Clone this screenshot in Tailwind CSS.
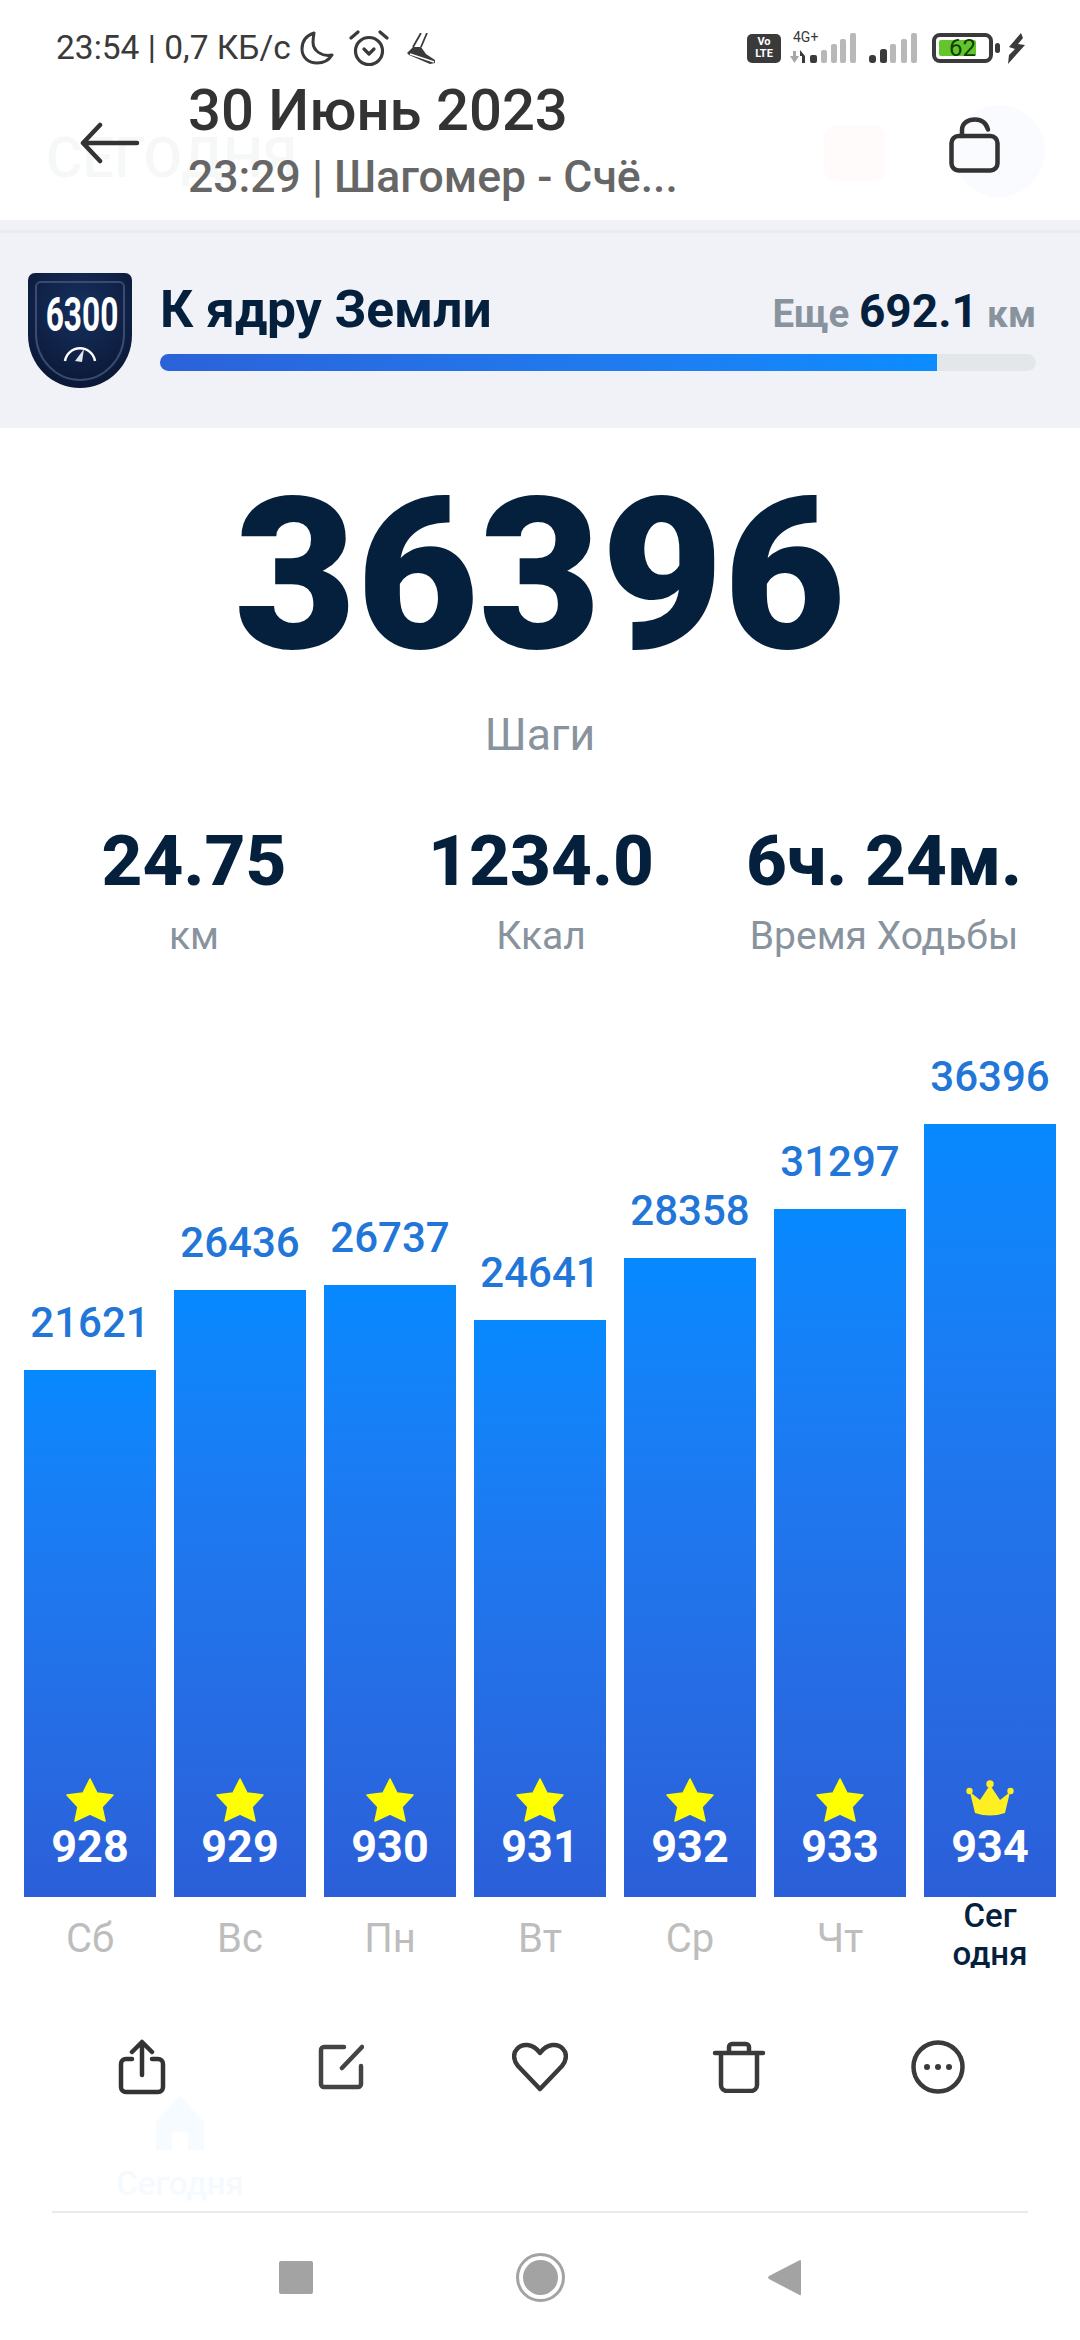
<!DOCTYPE html>
<html><head><meta charset="utf-8">
<script src="https://cdn.jsdelivr.net/npm/@tailwindcss/browser@4"></script>
</head>
<body class="bg-white">
<div class="relative w-[1080px] h-[2340px] overflow-hidden bg-white font-['Roboto',sans-serif]">
  <!-- header -->
  <header class="h-[220px] relative">
    <!-- faint ghost of the page behind the sheet -->
    <div class="absolute left-[46px] top-[126px] text-[56px] leading-[64px] font-medium text-[#f6f8f8]">СЕГОДНЯ</div>
    <div class="absolute left-[824px] top-[125px] w-[62px] h-[56px] rounded-[12px] bg-[#fffbfa]"></div>
    <div class="absolute left-[953px] top-[105px] w-[92px] h-[92px] rounded-full bg-[#f9fbfe]"></div>

    <div class="relative flex items-center justify-between h-[72px] pt-[24px] pl-[56px] pr-[55px]">
      <div class="flex items-center text-[#3a3a3a] text-[33.500px] leading-none">
        <span class="whitespace-nowrap">23:54 | 0,7 КБ/с</span>
        <svg class="w-[34px] h-[34px] ml-[9px]" viewBox="0 0 34 34" fill="none"><path d="M14 2C5 5 2 12 2 18c0 9 7 14 15 14 7 0 12-3 15-8-10 2-19-4-19-13 0-3 .5-6 1-9z" stroke="#3a3a3a" stroke-width="3" stroke-linejoin="round"/></svg>
        <svg class="w-[40px] h-[38px] ml-[15px]" viewBox="0 0 40 38" fill="none" stroke="#3a3a3a" stroke-width="3.200" stroke-linecap="round" stroke-linejoin="round"><circle cx="20" cy="22" r="13.500"/><path d="M15 20l5 5 5-5"/><path d="M2 9 9 3M38 9 31 3"/></svg>
        <svg class="w-[29px] h-[31px] ml-[17px]" viewBox="0 0 29 31" fill="none"><path d="M7 14 1 20l2 2 21 9 5-1v-3l-9-6-5-7z" fill="#3a3a3a"/><path d="M4 21l24 8" stroke="#fff" stroke-width="1.400"/><path d="M15 0 7 14M21 0l-6 14" stroke="#3a3a3a" stroke-width="1.800"/></svg>
      </div>
      <div class="flex items-center">
        <div class="w-[34px] h-[29px] rounded-[5px] bg-[#3a3a3a] text-white text-[11px] leading-[12px] font-bold text-center pt-[2px]">Vo<br>LTE</div>
        <div class="relative w-[66px] h-[32px] ml-[9px]">
          <span class="absolute left-[3px] top-[-2px] text-[14px] leading-[14px] text-[#3a3a3a]">4G+</span>
          <svg class="absolute left-0 top-0" width="66" height="32" viewBox="0 0 66 32"><path d="M0 24h3v-5h3v5h3l-4.500 7z" fill="#a8a8a8"/><path d="M10 18l5 6v7h-3v-7h-2z" fill="#3a3a3a"/><rect x="20" y="23" width="7" height="8" rx="2" fill="#3a3a3a"/><rect x="31" y="18" width="6" height="13" rx="2" fill="#b8b8b8"/><rect x="41" y="12" width="6" height="19" rx="2" fill="#b8b8b8"/><rect x="50" y="7" width="6" height="24" rx="2" fill="#b8b8b8"/><rect x="60" y="1" width="6" height="30" rx="2" fill="#b8b8b8"/></svg>
        </div>
        <svg class="ml-[13px]" width="48" height="32" viewBox="0 0 48 32"><rect x="0" y="23" width="7" height="8" rx="3" fill="#3a3a3a"/><rect x="11" y="17" width="7" height="14" rx="2.500" fill="#3a3a3a"/><rect x="21" y="12" width="6" height="19" rx="2" fill="#b8b8b8"/><rect x="32" y="7" width="6" height="24" rx="2" fill="#b8b8b8"/><rect x="42" y="1" width="6" height="30" rx="2" fill="#b8b8b8"/></svg>
        <div class="relative ml-[15px] w-[61px] h-[30px] rounded-[8px] border-[4px] border-[#3a3a3a] p-[3px]">
          <div class="h-full w-[37px] rounded-[2px] bg-[#63c52c]"></div>
          <span class="absolute left-[13px] top-[-3px] text-[24px] leading-[28px] text-[#123d05]">62</span>
        </div>
        <div class="w-[5px] h-[10px] ml-[2px] rounded-full bg-[#3a3a3a]"></div>
        <svg class="ml-[8px]" width="17" height="31" viewBox="0 0 17 31"><path d="M13 0 1 14l6 2-6 6-1 9L17 12l-7-1 5-6z" fill="#3a3a3a"/></svg>
      </div>
    </div>
    <div class="relative flex h-[148px]">
      <div class="w-[188px] pl-[80px] pt-[49px] shrink-0">
        <svg width="60" height="44" viewBox="0 0 60 44" fill="none" stroke="#333" stroke-width="4.500" stroke-linecap="round" stroke-linejoin="round"><path d="M3 22h54M20 4 3 22l17 18"/></svg>
      </div>
      <div class="w-[500px] pt-[6px] shrink-0">
        <div class="text-[#333] text-[58px] leading-[64px] font-medium whitespace-nowrap">30 Июнь 2023</div>
        <div class="text-[#666] text-[44.500px] leading-[60px] mt-[5px] font-medium whitespace-nowrap">23:29 | Шагомер - Счё...</div>
      </div>
      <div class="ml-[261px] pt-[45px] shrink-0">
        <svg width="51" height="56" viewBox="0 0 51 56" fill="none" stroke="#333" stroke-width="4.500"><rect x="2.500" y="19" width="46" height="34.500" rx="7"/><path d="M13 19v-6C13 6 19 2.500 26 2.500c6 0 11 3 13 10" stroke-linecap="round"/></svg>
      </div>
    </div>
  </header>

  <!-- achievement -->
  <section class="h-[208px] bg-[#f0f2f7] pt-[10px]">
    <div class="h-[3px] bg-[#e8ebef]"></div>
    <div class="flex items-start pl-[28px] pr-[44px] pt-[40px]">
      <div class="relative w-[104px] h-[115px] shrink-0">
        <svg width="104" height="115" viewBox="0 0 104 115" class="absolute left-0 top-0">
          <defs><radialGradient id="sh" cx="50%" cy="30%" r="75%"><stop offset="0" stop-color="#17305f"/><stop offset="1" stop-color="#0a1633"/></radialGradient></defs>
          <path d="M7 0h90a7 7 0 0 1 7 7v55c0 30-24 53-52 53S0 92 0 62V7a7 7 0 0 1 7-7z" fill="url(#sh)"/>
          <path d="M13 9h78a5 5 0 0 1 5 5v47c0 25-20 46-44 46S8 86 8 61V14a5 5 0 0 1 5-5z" fill="none" stroke="#3b4a70" stroke-width="2"/>
          <path d="M37 88a15.200 15.200 0 0 1 30 0" fill="none" stroke="#fff" stroke-width="2.500"/><path d="M47 88l9-12-2 13z" fill="#dfe4ee"/>
        </svg>
        <div class="absolute left-0 top-[13px] w-full text-center text-white text-[48px] leading-[58px] font-bold scale-x-[0.66]">6300</div>
      </div>
      <div class="ml-[28px] flex-1 pt-[7px]">
        <div class="flex items-baseline justify-between h-[60px]">
          <span class="text-[#05203c] text-[51.500px] leading-[60px] font-bold">К ядру Земли</span>
          <span class="leading-[60px] font-bold text-[#88939e] whitespace-nowrap"><span class="text-[38.500px]">Еще </span><span class="text-[#05203c] text-[46px]">692.1</span><span class="text-[37px]"> км</span></span>
        </div>
        <div class="h-[17px] mt-[14px] rounded-full bg-[#e4e7ea]">
          <div class="h-full w-[88.700%] rounded-l-full bg-gradient-to-r from-[#2b62d9] to-[#0a8dff]"></div>
        </div>
      </div>
    </div>
  </section>

  <!-- steps -->
  <section class="flex flex-col items-center">
    <div class="text-[#05203c] text-[211px] leading-[200px] font-black mt-[48px]">36396</div>
    <div class="text-[#88939e] text-[44.500px] leading-[48px] mt-[35px]">Шаги</div>
  </section>

  <section class="relative mt-[62px] h-[140px] flex">
    <div class="w-[388px] text-center shrink-0"><div class="text-[#05203c] text-[71px] leading-[80px] font-extrabold">24.75</div><div class="text-[#88939e] text-[39px] leading-[50px] mt-[10px]">км</div></div>
    <div class="w-[306px] text-center shrink-0"><div class="text-[#05203c] text-[71px] leading-[80px] font-extrabold">1234.0</div><div class="text-[#88939e] text-[39px] leading-[50px] mt-[10px]">Ккал</div></div>
    <div class="w-[380px] text-center shrink-0"><div class="text-[#05203c] text-[71px] leading-[80px] font-extrabold whitespace-nowrap">6ч. 24м.</div><div class="text-[#88939e] text-[39px] leading-[50px] mt-[10px]">Время Ходьбы</div></div>
  </section>

  <!-- chart -->
  <section class="h-[936px] flex items-end gap-[18px] px-[24px]">
    <div class="w-[132px]"><div class="text-center text-[#2176d8] text-[42px] leading-[50px] font-medium mb-[22px]">21621</div>
      <div class="h-[527px] bg-gradient-to-b from-[#0689ff] to-[#2b5fd8] flex flex-col justify-end items-center pb-[30px]">
        <svg width="48" height="44" viewBox="0 0 48 44"><path d="M24 1l7 14 16 2-11 12 3 14-15-7-15 7 3-14L1 17l16-2z" fill="#ffff00" stroke="#ffff00" stroke-width="1.500" stroke-linejoin="round"/></svg>
        <div class="text-white text-[45px] leading-[40px] font-bold mt-[5px]">928</div></div></div>
    <div class="w-[132px]"><div class="text-center text-[#2176d8] text-[42px] leading-[50px] font-medium mb-[22px]">26436</div>
      <div class="h-[607px] bg-gradient-to-b from-[#0689ff] to-[#2b5fd8] flex flex-col justify-end items-center pb-[30px]">
        <svg width="48" height="44" viewBox="0 0 48 44"><path d="M24 1l7 14 16 2-11 12 3 14-15-7-15 7 3-14L1 17l16-2z" fill="#ffff00" stroke="#ffff00" stroke-width="1.500" stroke-linejoin="round"/></svg>
        <div class="text-white text-[45px] leading-[40px] font-bold mt-[5px]">929</div></div></div>
    <div class="w-[132px]"><div class="text-center text-[#2176d8] text-[42px] leading-[50px] font-medium mb-[22px]">26737</div>
      <div class="h-[612px] bg-gradient-to-b from-[#0689ff] to-[#2b5fd8] flex flex-col justify-end items-center pb-[30px]">
        <svg width="48" height="44" viewBox="0 0 48 44"><path d="M24 1l7 14 16 2-11 12 3 14-15-7-15 7 3-14L1 17l16-2z" fill="#ffff00" stroke="#ffff00" stroke-width="1.500" stroke-linejoin="round"/></svg>
        <div class="text-white text-[45px] leading-[40px] font-bold mt-[5px]">930</div></div></div>
    <div class="w-[132px]"><div class="text-center text-[#2176d8] text-[42px] leading-[50px] font-medium mb-[22px]">24641</div>
      <div class="h-[577px] bg-gradient-to-b from-[#0689ff] to-[#2b5fd8] flex flex-col justify-end items-center pb-[30px]">
        <svg width="48" height="44" viewBox="0 0 48 44"><path d="M24 1l7 14 16 2-11 12 3 14-15-7-15 7 3-14L1 17l16-2z" fill="#ffff00" stroke="#ffff00" stroke-width="1.500" stroke-linejoin="round"/></svg>
        <div class="text-white text-[45px] leading-[40px] font-bold mt-[5px]">931</div></div></div>
    <div class="w-[132px]"><div class="text-center text-[#2176d8] text-[42px] leading-[50px] font-medium mb-[22px]">28358</div>
      <div class="h-[639px] bg-gradient-to-b from-[#0689ff] to-[#2b5fd8] flex flex-col justify-end items-center pb-[30px]">
        <svg width="48" height="44" viewBox="0 0 48 44"><path d="M24 1l7 14 16 2-11 12 3 14-15-7-15 7 3-14L1 17l16-2z" fill="#ffff00" stroke="#ffff00" stroke-width="1.500" stroke-linejoin="round"/></svg>
        <div class="text-white text-[45px] leading-[40px] font-bold mt-[5px]">932</div></div></div>
    <div class="w-[132px]"><div class="text-center text-[#2176d8] text-[42px] leading-[50px] font-medium mb-[22px]">31297</div>
      <div class="h-[688px] bg-gradient-to-b from-[#0689ff] to-[#2b5fd8] flex flex-col justify-end items-center pb-[30px]">
        <svg width="48" height="44" viewBox="0 0 48 44"><path d="M24 1l7 14 16 2-11 12 3 14-15-7-15 7 3-14L1 17l16-2z" fill="#ffff00" stroke="#ffff00" stroke-width="1.500" stroke-linejoin="round"/></svg>
        <div class="text-white text-[45px] leading-[40px] font-bold mt-[5px]">933</div></div></div>
    <div class="w-[132px]"><div class="text-center text-[#2176d8] text-[42px] leading-[50px] font-medium mb-[22px]">36396</div>
      <div class="h-[773px] bg-gradient-to-b from-[#0689ff] to-[#2b5fd8] flex flex-col justify-end items-center pb-[30px]">
        <svg width="48" height="44" viewBox="0 0 48 44"><circle cx="3.500" cy="13" r="3.200" fill="#ffee22"/><circle cx="24" cy="6" r="3.700" fill="#ffee22"/><circle cx="44.500" cy="13" r="3.200" fill="#ffee22"/><path d="M4 14l10 8 10-15 10 15 10-8-5 21q-15 5-30 0z" fill="#ffee22"/></svg>
        <div class="text-white text-[45px] leading-[40px] font-bold mt-[5px]">934</div></div></div>
  </section>

  <!-- day labels -->
  <section class="h-[115px] flex gap-[18px] px-[24px] text-center text-[#bdbdbd] text-[40px] leading-[50px]">
    <div class="w-[132px] pt-[17px]">Сб</div>
    <div class="w-[132px] pt-[17px]">Вс</div>
    <div class="w-[132px] pt-[17px]">Пн</div>
    <div class="w-[132px] pt-[17px]">Вт</div>
    <div class="w-[132px] pt-[17px]">Ср</div>
    <div class="w-[132px] pt-[17px]">Чт</div>
    <div class="w-[132px] h-[71px] overflow-hidden text-[#05203c] text-[33px] leading-[38px] font-medium">Сег<br>одня</div>
  </section>

  <!-- actions -->
  <section class="h-[110px] grid grid-cols-5 px-[42px] items-center justify-items-center">
    <svg width="48" height="56" viewBox="0 0 48 56" fill="none" stroke="#333" stroke-width="4.500" stroke-linecap="round" stroke-linejoin="round"><path d="M14 20H8a5 5 0 0 0-5 5v23a5 5 0 0 0 5 5h32a5 5 0 0 0 5-5V25a5 5 0 0 0-5-5h-6"/><path d="M24 36V4M14 13l10-10 10 10"/></svg>
    <svg width="46" height="46" viewBox="0 0 46 46" fill="none" stroke="#444" stroke-width="4.500" stroke-linecap="round" stroke-linejoin="round"><path d="M26 3H6a3 3 0 0 0-3 3v34a3 3 0 0 0 3 3h34a3 3 0 0 0 3-3V22"/><path d="M44 3 24 24"/></svg>
    <svg width="56" height="50" viewBox="0 0 56 50" fill="none" stroke="#3a3a3a" stroke-width="4.500" stroke-linejoin="round"><path d="M28 47 6 24C1 18 1 11 5 7c5-6 16-6 23 4 7-10 18-10 23-4 4 4 4 11-1 17z"/></svg>
    <svg width="54" height="52" viewBox="0 0 54 52" fill="none" stroke="#3a3a3a" stroke-width="4.500" stroke-linecap="round" stroke-linejoin="round"><path d="M3 12h48M17 11V6a3 3 0 0 1 3-3h14a3 3 0 0 1 3 3v5M9 13v31a6 6 0 0 0 6 6h24a6 6 0 0 0 6-6V13"/></svg>
    <svg width="54" height="54" viewBox="0 0 54 54"><circle cx="27" cy="27" r="24.500" fill="none" stroke="#3a3a3a" stroke-width="4.500"/><circle cx="16" cy="27" r="3" fill="#3a3a3a"/><circle cx="27" cy="27" r="3" fill="#3a3a3a"/><circle cx="38" cy="27" r="3" fill="#3a3a3a"/></svg>
  </section>

  <!-- ghost of the tab bar behind the sheet -->
  <div class="absolute left-[100px] top-[2096px] w-[160px] flex flex-col items-center text-[#f5faff] text-[33px] leading-[40px] font-medium">
    <svg width="48" height="54" viewBox="0 0 48 54"><path d="M24 0 48 26v28H32V36H16v18H0V26z" fill="#f6fbff"/></svg>
    <div class="mt-[14px]">Сегодня</div>
  </div>

  <!-- nav bar -->
  <div class="mt-[89px] mx-[52px] h-[2px] bg-[#e9e9e9]"></div>
  <nav class="h-[128px] relative flex items-center justify-center">
    <div class="flex items-center justify-center gap-[203px]">
      <div class="w-[34px] h-[33px] rounded-[2px] bg-[#a3a3a3]"></div>
      <div class="w-[49px] h-[49px] rounded-full border-[3px] border-[#a3a3a3] flex items-center justify-center"><div class="w-[35px] h-[35px] rounded-full bg-[#a3a3a3]"></div></div>
      <svg width="33" height="37" viewBox="0 0 33 37"><path d="M32 1a1 1 0 0 1 1 1v33a1 1 0 0 1-1.500 1L1 20a2 2 0 0 1 0-3z" fill="#a3a3a3"/></svg>
    </div>
  </nav>
</div>
</body></html>
